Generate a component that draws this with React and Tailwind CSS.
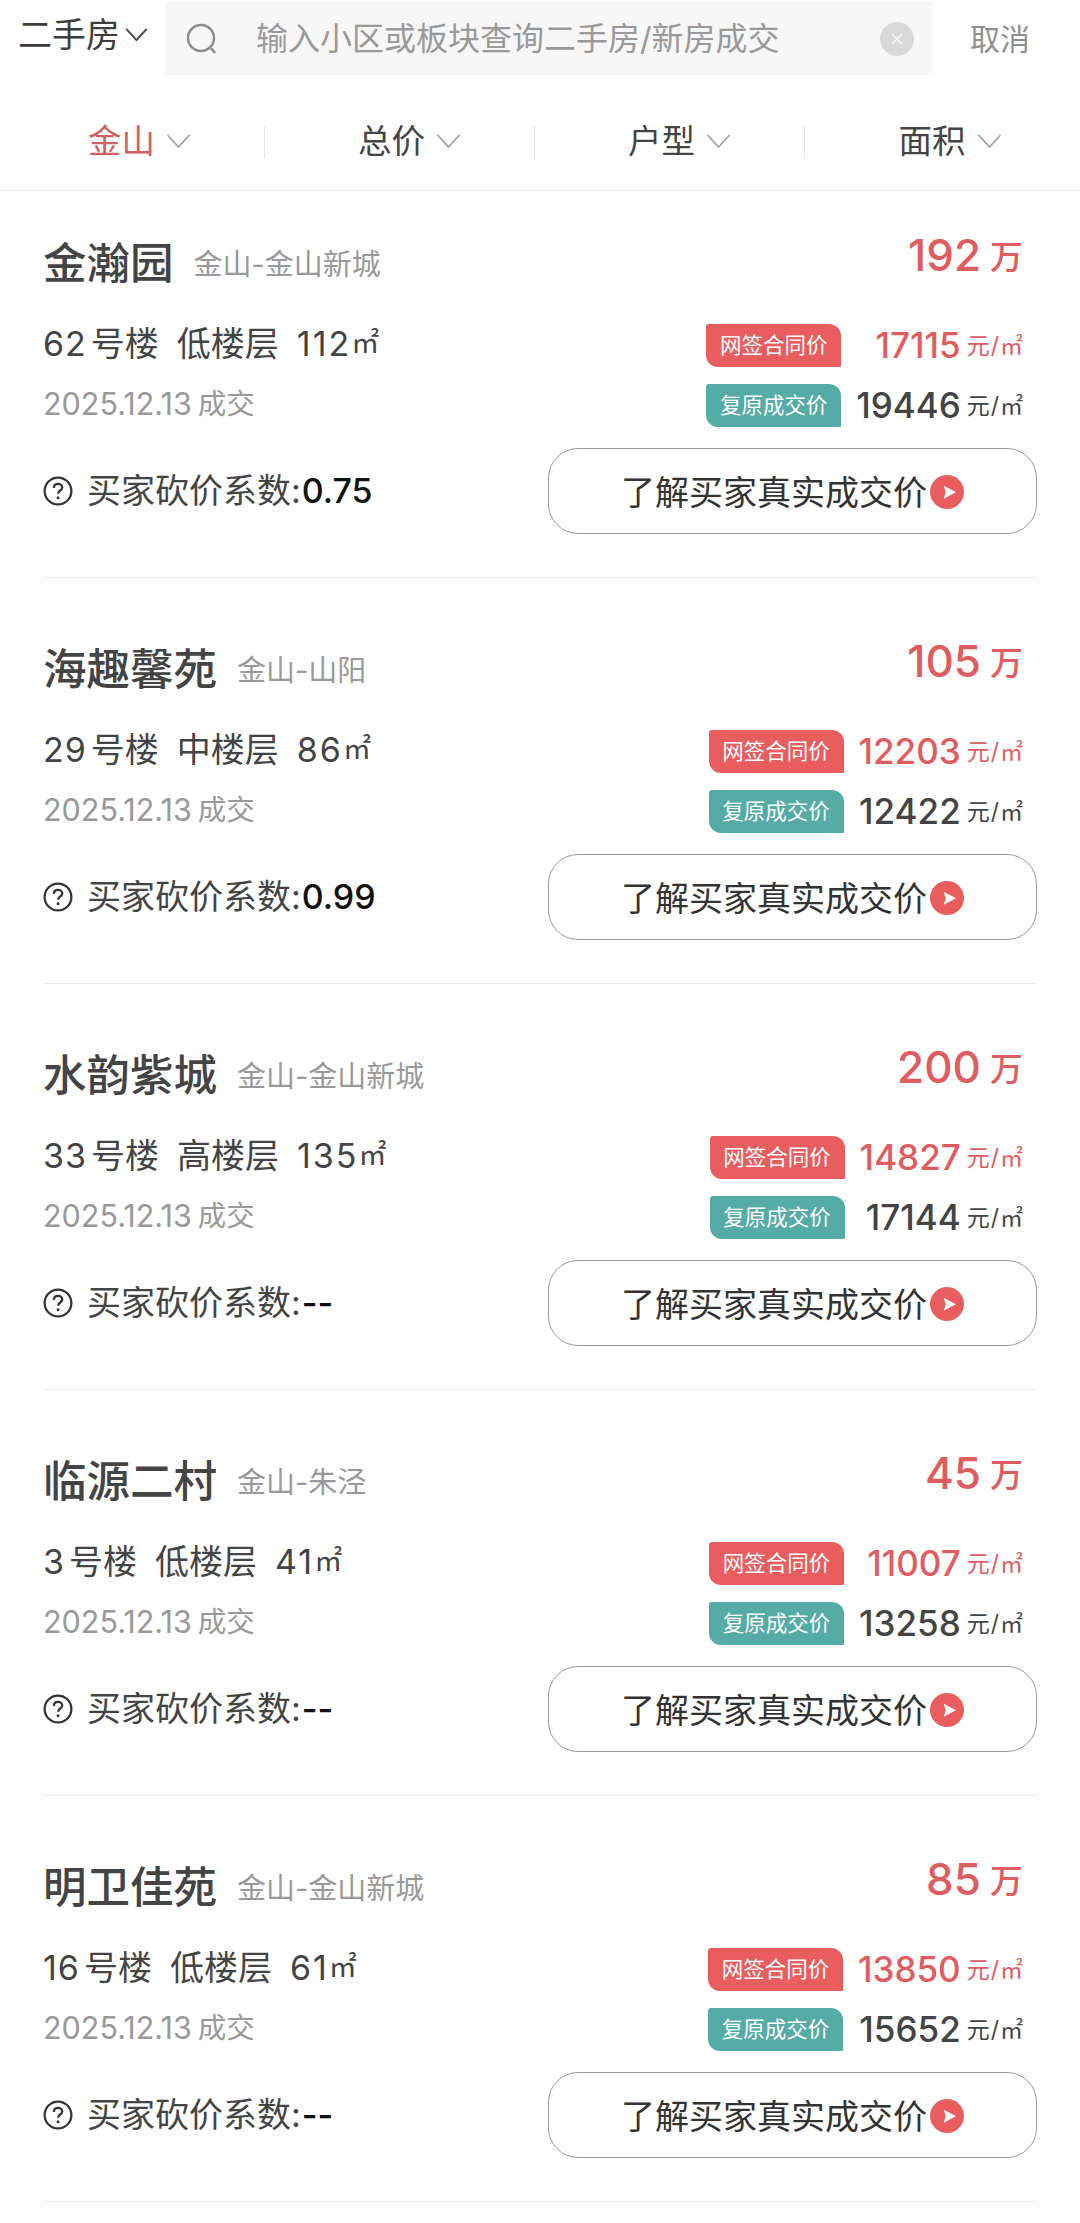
const SANS = "font-['Inter','Noto_Sans_CJK_SC',sans-serif]";

const deals = [
  { name: "金瀚园", area: "金山-金山新城", building: "62", floor: "低楼层", size: "112", total: "192", signed: "17115", real: "19446", factor: "0.75" },
  { name: "海趣馨苑", area: "金山-山阳", building: "29", floor: "中楼层", size: "86", total: "105", signed: "12203", real: "12422", factor: "0.99" },
  { name: "水韵紫城", area: "金山-金山新城", building: "33", floor: "高楼层", size: "135", total: "200", signed: "14827", real: "17144", factor: "--" },
  { name: "临源二村", area: "金山-朱泾", building: "3", floor: "低楼层", size: "41", total: "45", signed: "11007", real: "13258", factor: "--" },
  { name: "明卫佳苑", area: "金山-金山新城", building: "16", floor: "低楼层", size: "61", total: "85", signed: "13850", real: "15652", factor: "--" },
];

function Chevron({ className, weight }) {
  return (
    <svg viewBox="0 0 24 14" fill="none" stroke="currentColor" strokeWidth={weight} className={className}>
      <path d="M1 1l11 12L23 1" />
    </svg>
  );
}

function Filter({ label, active, divider }) {
  return (
    <div className={`w-[270px] h-[32px] shrink-0 flex items-center justify-center gap-[11px] pl-[20px] ${divider ? "border-r border-[#e4e4e4]" : ""}`}>
      <span className={`text-[33.5px] leading-none ${active ? "text-[#cf5f63]" : "text-[#444444]"}`}>{label}</span>
      <Chevron weight="1.8" className="w-[25px] h-[14px] mt-[-2px] text-[#a3a3a3]" />
    </div>
  );
}

function Unit({ className }) {
  return (
    <span className={`ml-[6px] mt-[2px] text-[23px] leading-none whitespace-nowrap ${className}`}>
      元<span className="mx-[1px]">/</span>㎡
    </span>
  );
}

function Tag({ children, color }) {
  return (
    <div className={`w-[135px] h-[43px] flex items-center justify-center rounded-tr-[12px] rounded-bl-[12px] rounded-tl-[3px] rounded-br-[1px] text-[21.5px] leading-none text-white ${color}`}>
      {children}
    </div>
  );
}

function Deal({ d }) {
  return (
    <div className="h-[406px] first:h-[387px] pt-[61px] first:pt-[42px] ml-[43px] mr-[43px] border-b border-[#ececec]">
      <div className="flex justify-between items-start">
        <div className="flex flex-col">
          <div className="flex items-center h-[62px]">
            <span className="text-[43.5px] leading-none font-medium text-[#444444]">{d.name}</span>
            <span className="ml-[20px] text-[29px] leading-none text-[#999999]">{d.area}</span>
          </div>
          <div className="flex items-center gap-[18px] h-[40px] mt-[29px] text-[34px] leading-none text-[#444444]">
            <span><span className="tracking-[1px]">{d.building}</span><span className="ml-[4px]">号楼</span></span>
            <span>{d.floor}</span>
            <span className="flex items-center">
              <span className="tracking-[2px]">{d.size}</span>
              <span className="text-[28px] mt-[-3px]">㎡</span>
            </span>
          </div>
          <div className="flex items-center h-[40px] mt-[20px] text-[30.5px] leading-none text-[#999999]">
            <span>2025.12.13</span>
            <span className="ml-[6px] text-[28.5px]">成交</span>
          </div>
        </div>
        <div className="flex flex-col items-end pr-[14px]">
          <div className="flex items-center h-[50px] mt-[-3px] text-[#df5c60]">
            <span className="text-[44px] leading-none font-medium">{d.total}</span>
            <span className="ml-[9px] mt-[4px] text-[33px] leading-none font-medium">万</span>
          </div>
          <div className="grid grid-cols-[auto_auto] gap-x-[15px] gap-y-[17px] mt-[44px] items-center">
            <Tag color="bg-[#e95d5f]">网签合同价</Tag>
            <div className="flex items-center justify-end text-[#df5c60]">
              <span className="text-[35px] leading-none font-medium">{d.signed}</span>
              <Unit className="text-[#df5c60]" />
            </div>
            <Tag color="bg-[#55aca6]">复原成交价</Tag>
            <div className="flex items-center justify-end text-[#444444]">
              <span className="text-[35px] leading-none font-medium">{d.real}</span>
              <Unit className="text-[#444444]" />
            </div>
          </div>
        </div>
      </div>
      <div className="flex justify-between items-center mt-[21px]">
        <div className="flex items-center text-[34px] leading-none text-[#444444]">
          <svg viewBox="0 0 30 30" fill="none" className="w-[30px] h-[30px] mr-[14px]">
            <circle cx="15" cy="15" r="13.4" stroke="#333333" strokeWidth="2.2" />
            <path d="M10.800 11.800c.2-2.500 1.900-3.900 4.200-3.900 2.400 0 4.200 1.500 4.200 3.500 0 1.700-1 2.500-2.300 3.400-1.100.8-1.700 1.400-1.700 3" stroke="#333333" strokeWidth="2.300" />
            <circle cx="15.100" cy="21.800" r="1.500" fill="#333333" />
          </svg>
          <span>买家砍价系数:</span>
          <span className="ml-[1px] text-[#111111] font-medium">{d.factor}</span>
        </div>
        <div className="w-[489px] h-[86px] flex items-center justify-center rounded-[30px] border border-[#9a9a9a] pt-[3px]">
          <span className="text-[34px] leading-none text-[#333333]">了解买家真实成交价</span>
          <svg viewBox="0 0 34 34" className="w-[34px] h-[34px] ml-[3px] mt-[-1px]">
            <circle cx="17" cy="17" r="17" fill="#e95d5f" />
            <path d="M13.700 10.700L26 17.200 13.700 23.700 15.800 17.200z" fill="#ffffff" />
          </svg>
        </div>
      </div>
    </div>
  );
}

export default function App() {
  return (
    <div className={`w-[1080px] h-[2223px] bg-white overflow-hidden ${SANS}`}>
      <div className="flex items-start h-[77px] pt-[2px]">
        <div className="w-[165px] h-[73px] flex items-center pl-[18px] pb-[8px] text-[34px] leading-none text-[#3d3d3d]">
          <span>二手房</span>
          <Chevron weight="2" className="w-[25px] h-[13px] ml-[4px] mt-[-1px] text-[#444444]" />
        </div>
        <div className="w-[768px] h-[73px] bg-[#f7f7f7] flex items-center pl-[21px] pr-[19px] pt-[1px]">
          <svg viewBox="0 0 32 32" fill="none" stroke="#8c8c8c" strokeWidth="2.500" className="w-[32px] h-[32px]">
            <circle cx="15" cy="15" r="13" />
            <path d="M25 25l4 5" />
          </svg>
          <span className="ml-[38px] flex-1 text-[32px] leading-none text-[#999999]">输入小区或板块查询二手房/新房成交</span>
          <div className="w-[34px] h-[34px] rounded-full bg-[#d9d9d9] flex items-center justify-center">
            <svg viewBox="0 0 14 14" stroke="#ffffff" strokeWidth="1.300" className="w-[14px] h-[14px]">
              <path d="M2 2l10 10M12 2L2 12" />
            </svg>
          </div>
        </div>
        <div className="flex-1 h-[73px] flex items-center pl-[37px] text-[30px] leading-none text-[#8f8f8f]">取消</div>
      </div>
      <div className="flex items-center h-[114px] border-b border-[#ececec] ml-[-5px] pt-[16px]">
        <Filter label="金山" active divider />
        <Filter label="总价" divider />
        <Filter label="户型" divider />
        <Filter label="面积" />
      </div>
      <div className="flex flex-col">
        {deals.map((d) => (
          <Deal key={d.name} d={d} />
        ))}
      </div>
    </div>
  );
}
